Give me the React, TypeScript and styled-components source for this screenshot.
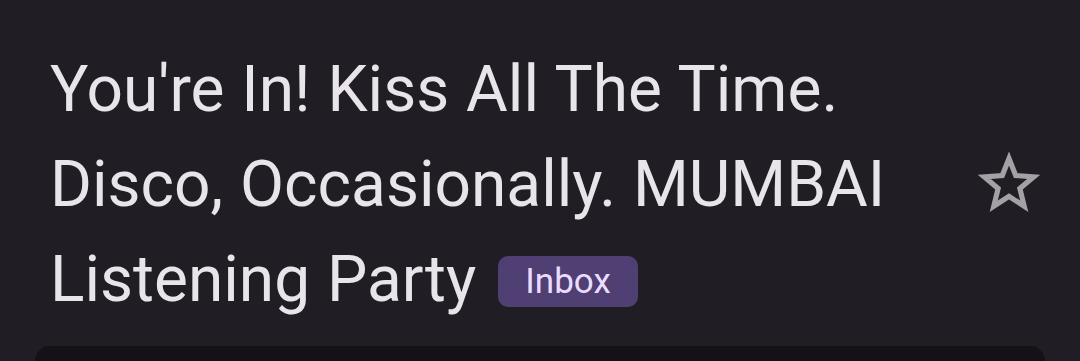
import React from "react";
import styled, { createGlobalStyle } from "styled-components";

const Global = createGlobalStyle`
  html, body { margin: 0; padding: 0; background: #201e24; }
  body { width: 1080px; height: 361px; overflow: hidden; }
`;

const Page = styled.div`
  width: 1080px;
  height: 361px;
  display: flex;
  flex-direction: column;
  background: #201e24;
  overflow: hidden;
`;

const Header = styled.div`
  display: flex;
  align-items: center;
  padding: 42px 0 0 50px;
`;

const Title = styled.h1`
  margin: 0;
  width: 920px;
  font-family: Roboto, "Noto Sans", sans-serif;
  font-weight: 400;
  font-size: 64px;
  line-height: 95px;
  color: #e8e4ea;
  word-spacing: 1px;
`;

const Chip = styled.span`
  display: inline-block;
  vertical-align: 8px;
  margin-left: 22px;
  padding: 0 27px;
  height: 51px;
  line-height: 51px;
  border-radius: 10px;
  background: #4f3f73;
  color: #eadcff;
  font-size: 35px;
  word-spacing: 0;
`;

const StarButton = styled.div`
  width: 62px;
  height: 62px;
  margin-left: 8px;
  margin-top: -4px;
  display: flex;
  align-items: center;
  justify-content: center;
`;

const Panel = styled.div`
  margin: 19px 35px 0;
  flex: 1;
  background: #141217;
  border-radius: 28px 28px 0 0;
`;

export default function App() {
  return (
    <Page>
      <Global />
      <Header>
        <Title>
          You're In! Kiss All The Time. Disco, Occasionally. MUMBAI Listening Party
          <Chip>Inbox</Chip>
        </Title>
        <StarButton>
          <svg width="62" height="62" viewBox="0 0 24 24" fill="none">
            <path
              d="M12 2.5l2.6 6.6 7 .5-5.4 4.5 1.7 6.9L12 17.2 6.1 21l1.7-6.9L2.4 9.6l7-.5z"
              stroke="#a3a1a6"
              strokeWidth="2"
              strokeLinejoin="miter"
            />
          </svg>
        </StarButton>
      </Header>
      <Panel />
    </Page>
  );
}
